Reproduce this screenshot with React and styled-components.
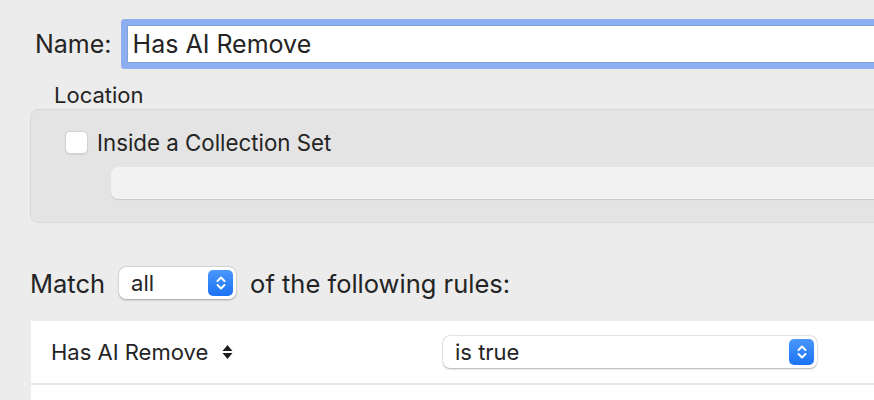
import React from 'react'
import styled, { createGlobalStyle } from "styled-components";

const Global = createGlobalStyle`
  html, body {
    margin: 0;
    padding: 0;
    background: #ececec;
    overflow: hidden;
  }
  body {
    font-family: Inter, "Noto Sans", sans-serif;
    color: #242424;
  }
`;

const Page = styled.div`
  width: 1100px;
  height: 400px;
  display: flex;
  flex-direction: column;
`;

const NameRow = styled.div`
  display: flex;
  align-items: center;
  height: 50px;
  margin-top: 19px;
  padding-left: 35px;
`;

const NameLabel = styled.label`
  font-size: 25px;
  margin-right: 9px;
`;

const NameInput = styled.div`
  flex: 1;
  height: 36px;
  margin: 0 0 0 6px;
  background: white;
  border: 1px solid #7fa0dc;
  box-shadow: 0 0 0 6px #8daef0;
  border-radius: 1px;
  display: flex;
  align-items: center;
  padding-left: 5px;
  font-size: 25px;
`;

const SectionLabel = styled.div`
  font-size: 22px;
  margin: 12px 0 0 54px;
  line-height: 28px;
`;

const GroupBox = styled.div`
  margin: 0 0 0 30px;
  background: #e4e4e4;
  border: 1px solid #d9d9d9;
  border-radius: 8px;
  padding: 20px 0 0 34px;
  box-sizing: border-box;
  height: 114px;
  display: flex;
  flex-direction: column;
  gap: 13px;
`;

const CheckRow = styled.div`
  display: flex;
  align-items: center;
  gap: 9px;
  font-size: 22.3px;
  height: 24px;
`;

const Checkbox = styled.span`
  width: 21px;
  height: 21px;
  background: #fff;
  border: 1px solid #d2d2d2;
  border-radius: 5px;
  box-shadow: 0 0.5px 1px rgba(0, 0, 0, 0.08);
`;

const DisabledField = styled.div`
  margin-left: 46px;
  height: 32px;
  background: #f2f2f2;
  border-radius: 7px;
  box-shadow: 0 1px 1px rgba(0, 0, 0, 0.12);
`;

const MatchRow = styled.div`
  display: flex;
  align-items: center;
  gap: 14px;
  margin: 44px 0 0 30px;
  font-size: 25.5px;
  height: 32px;
`;

const Popup = styled.div`
  width: ${p => p.$width}px;
  height: 32px;
  box-sizing: border-box;
  background: #fff;
  border-radius: 7px;
  box-shadow: 0 0.5px 2px rgba(0, 0, 0, 0.3), 0 0 0 0.5px rgba(0, 0, 0, 0.06);
  display: flex;
  align-items: center;
  justify-content: space-between;
  padding: 0 3px 0 12px;
  font-size: 22px;
`;

const Stepper = styled.span`
  width: 25px;
  height: 26px;
  border-radius: 5px;
  background: linear-gradient(#4a97fb, #1b72f4);
  display: flex;
  align-items: center;
  justify-content: center;
`;

const RulesTable = styled.div`
  margin: 22px 0 0 31px;
  background: #fff;
  flex: 1;
`;

const RuleRow = styled.div`
  display: grid;
  grid-template-columns: 392px 374px;
  align-items: center;
  height: 62px;
  padding-left: 20px;
  border-bottom: 2px solid #e6e6e6;
`;

const Criterion = styled.div`
  display: flex;
  align-items: center;
  gap: 14px;
  font-size: 22px;
`;

const StepperIcon = () => (
  <svg width="12" height="18" viewBox="0 0 12 18">
    <path d="M2.5 7 L6 3.5 L9.5 7 M2.5 11 L6 14.5 L9.5 11" fill="none" stroke="#fff" strokeWidth="2" strokeLinecap="round" strokeLinejoin="round" />
  </svg>
);

const SortIcon = () => (
  <svg width="11" height="16" viewBox="0 0 11 16">
    <path d="M5.5 1 L10.5 7 L0.5 7 Z M5.5 15 L10.5 9 L0.5 9 Z" fill="#1e1e1e" />
  </svg>
);

const App = () => {
  return (
    <Page>
      <Global />
      <NameRow>
        <NameLabel>Name:</NameLabel>
        <NameInput>Has AI Remove</NameInput>
      </NameRow>
      <SectionLabel>Location</SectionLabel>
      <GroupBox>
        <CheckRow>
          <Checkbox />
          Inside a Collection Set
        </CheckRow>
        <DisabledField />
      </GroupBox>
      <MatchRow>
        Match
        <Popup $width={117}>
          all
          <Stepper><StepperIcon /></Stepper>
        </Popup>
        of the following rules:
      </MatchRow>
      <RulesTable>
        <RuleRow>
          <Criterion>
            Has AI Remove
            <SortIcon />
          </Criterion>
          <Popup $width={374}>
            is true
            <Stepper><StepperIcon /></Stepper>
          </Popup>
        </RuleRow>
      </RulesTable>
    </Page>
  )
}

export default App
